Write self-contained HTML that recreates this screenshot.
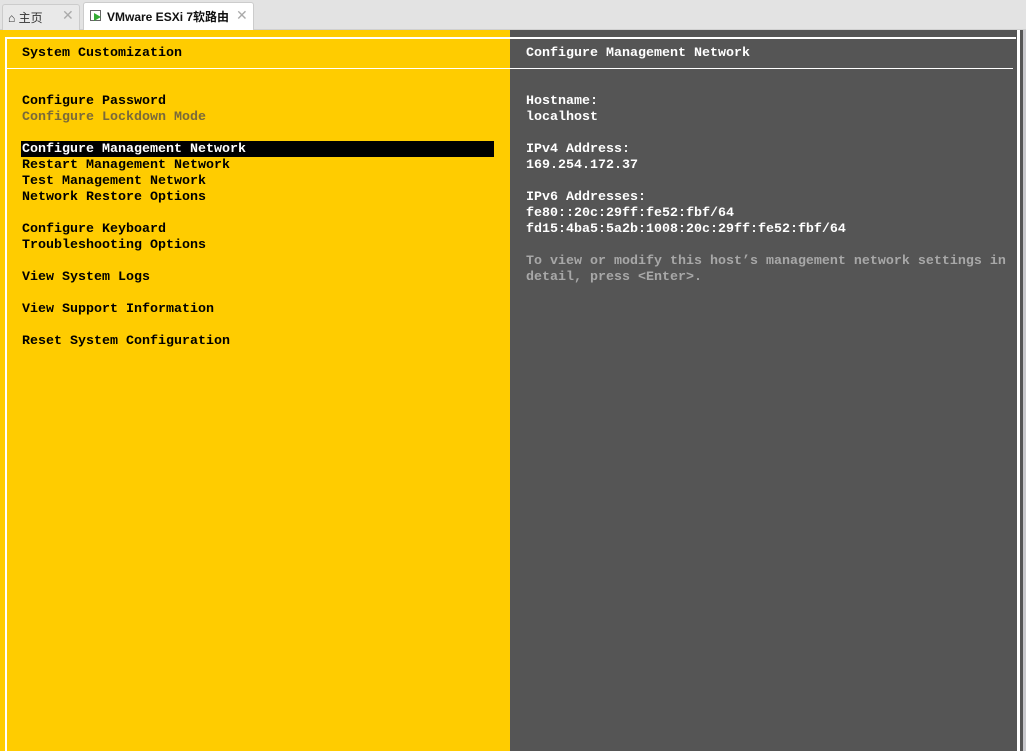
<html><head><style>
body{margin:0;width:1026px;height:751px;background:#e3e3e3;position:relative;overflow:hidden;font-family:"Liberation Sans","Noto Sans CJK SC",sans-serif}
.t{position:absolute;font-family:"Liberation Mono",monospace;font-size:13.33px;line-height:16px;white-space:pre;font-weight:bold}
.y{color:#000}.g{color:#7a6a3a}.w{color:#fff}.lg{color:#a8a8a8}
</style></head><body>
<div style="position:absolute;left:0;top:0;width:1026px;height:29px;background:#e3e3e3;border-bottom:1px solid #d0d0d0"></div>
<div style="position:absolute;left:2px;top:4px;width:76px;height:25px;background:#e9e9e9;border:1px solid #ccc;border-bottom:none;border-radius:3px 3px 0 0"></div>
<div style="position:absolute;left:8px;top:9px;font-size:12px;color:#333">⌂ 主页</div>
<div style="position:absolute;left:62px;top:7px;font-size:14px;color:#aaa">✕</div>
<div style="position:absolute;left:83px;top:2px;width:169px;height:28px;background:#fff;border:1px solid #ccc;border-bottom:none;border-radius:3px 3px 0 0"></div>
<div style="position:absolute;left:90px;top:10px;width:9px;height:9px;border:1px solid #666"></div>
<div style="position:absolute;left:94px;top:13px;width:0;height:0;border-left:7px solid #3a3;border-top:4px solid transparent;border-bottom:4px solid transparent"></div>
<div style="position:absolute;left:107px;top:8px;font-size:12px;font-weight:bold;color:#111">VMware ESXi 7软路由</div>
<div style="position:absolute;left:236px;top:7px;font-size:14px;color:#aaa">✕</div>
<div style="position:absolute;left:0;top:30px;width:510px;height:721px;background:#ffcc00"></div>
<div style="position:absolute;left:510px;top:30px;width:507px;height:721px;background:#555"></div>
<div style="position:absolute;left:1017px;top:30px;width:3px;height:721px;background:#fff"></div>
<div style="position:absolute;left:1020px;top:30px;width:3px;height:721px;background:#555"></div>
<div style="position:absolute;left:1023px;top:30px;width:3px;height:721px;background:#c8c8cc"></div>
<div style="position:absolute;left:5px;top:37px;width:1011px;height:2px;background:#fff"></div>
<div style="position:absolute;left:5px;top:37px;width:2px;height:714px;background:#fff"></div>
<div style="position:absolute;left:7px;top:68px;width:1006px;height:1px;background:#fff"></div>
<div style="position:absolute;left:21px;top:141px;width:473px;height:16px;background:#000"></div>
<div class="t y" style="left:22px;top:46px">System Customization</div>
<div class="t y" style="left:22px;top:94px">Configure Password</div>
<div class="t g" style="left:22px;top:110px">Configure Lockdown Mode</div>
<div class="t w" style="left:22px;top:142px">Configure Management Network</div>
<div class="t y" style="left:22px;top:158px">Restart Management Network
Test Management Network
Network Restore Options

Configure Keyboard
Troubleshooting Options

View System Logs

View Support Information

Reset System Configuration</div>
<div class="t w" style="left:526px;top:46px">Configure Management Network</div>
<div class="t w" style="left:526px;top:94px">Hostname:
localhost

IPv4 Address:
169.254.172.37

IPv6 Addresses:
fe80::20c:29ff:fe52:fbf/64
fd15:4ba5:5a2b:1008:20c:29ff:fe52:fbf/64</div>
<div class="t lg" style="left:526px;top:254px">To view or modify this host’s management network settings in
detail, press &lt;Enter&gt;.</div>
</body></html>
